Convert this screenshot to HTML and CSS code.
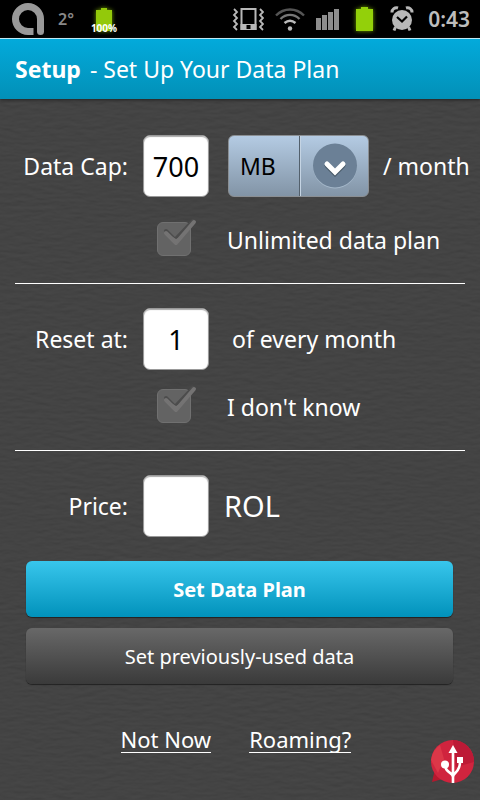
FILE: index.html
```html
<!DOCTYPE html>
<html lang="en">
<head>
<meta charset="utf-8">
<meta name="viewport" content="width=device-width, initial-scale=1">
<title>Setup - Set Up Your Data Plan</title>
<link rel="stylesheet" href="styles.css">
</head>
<body>
<svg class="texture" aria-hidden="true">
  <filter id="grain" x="0" y="0" width="100%" height="100%" color-interpolation-filters="sRGB">
    <feTurbulence type="fractalNoise" baseFrequency="0.07 0.25" numOctaves="3" seed="4" result="n"/>
    <feDiffuseLighting in="n" lighting-color="#fff" surfaceScale="1" diffuseConstant="0.4">
      <feDistantLight azimuth="270" elevation="42"/>
    </feDiffuseLighting>
  </filter>
  <rect width="100%" height="100%" filter="url(#grain)"/>
</svg>

<div class="status">
  <div class="status-left">
    <svg class="logo" width="34" height="34" viewBox="0 0 34 34" fill="none" stroke="#999" aria-hidden="true">
      <path d="M29.500 29.500V17A12.500 12.500 0 1 0 17 29.500H22.500" stroke-width="7"/>
      <path d="M29.500 28V29.500" stroke-width="7" stroke-linecap="round"/>
    </svg>
    <span class="temp">2°</span>
    <span class="charge">
      <svg width="28" height="32" viewBox="0 0 28 32" aria-hidden="true">
        <path class="glow" d="M6 7h5V5h6v2h5v21H6z" fill="#93c90a"/>
      </svg>
      <span class="percent">100%</span>
    </span>
  </div>
  <div class="status-right">
    <svg width="32" height="26" viewBox="0 0 32 26" fill="none" stroke="#b8b8b8" stroke-width="2" aria-hidden="true">
      <path d="M9.500 3h14v20h-14z"/>
      <path d="M8.500 18h16v6h-16z" fill="#b8b8b8" stroke="none"/>
      <path d="M14.500 19h4v4h-4z" fill="#000" stroke="none"/>
      <path d="M2 3l3 3-3 3 3 3-3 3 3 3-3 3 3 3M28 3l3 3-3 3 3 3-3 3 3 3-3 3 3 3" stroke-width="1.800"/>
    </svg>
    <svg width="30" height="26" viewBox="0 0 30 26" fill="none" stroke-width="2.400" aria-hidden="true">
      <path d="M1 9.500C9 1.500 21 1.500 29 9.500" stroke="#555"/>
      <path d="M5.500 13C11 7.500 19 7.500 24.500 13" stroke="#777"/>
      <path d="M9.500 17C13 14 17 14 20.500 17" stroke="#bbb"/>
      <circle cx="15" cy="22.500" r="2.200" fill="#bbb"/>
    </svg>
    <svg width="24" height="26" viewBox="0 0 24 26" fill="#8d8d8d" aria-hidden="true">
      <path d="M0 12h5v12H0zM6 9h5v15H6zM12 6h5v18h-5zM18 3h5v21h-5z"/>
    </svg>
    <svg width="28" height="32" viewBox="0 0 28 32" aria-hidden="true">
      <path class="glow" d="M5 6h5V4h7v2h5v22H5z" fill="#93d00a"/>
    </svg>
    <svg width="24" height="26" viewBox="0 0 24 26" aria-hidden="true">
      <path d="M2 6.500a4.500 4.500 0 0 1 6-4.500M22 6.500a4.500 4.500 0 0 0-6-4.500M5.500 21L4 24.500M18.500 21l1.500 3.500" fill="none" stroke="#b8b8b8" stroke-width="3"/>
      <circle cx="12" cy="14" r="10" fill="#b8b8b8"/>
      <path d="M7 11l5 4.500 5-5" fill="none" stroke="#000" stroke-width="2.200"/>
    </svg>
    <time class="clock">0:43</time>
  </div>
</div>

<header class="title">
  <h1><b>Setup</b> <span>- Set Up Your Data Plan</span></h1>
</header>

<form class="form">
  <section class="group first">
    <div class="row">
      <label for="cap">Data Cap:</label>
      <input class="field" id="cap" type="text" value="700">
      <div class="after">
        <div class="picker">
          <select id="unit" aria-label="Unit"><option>MB</option><option>GB</option></select>
          <svg class="arrow" width="70" height="62" viewBox="0 0 70 62" aria-hidden="true">
            <path d="M.5 1v60" stroke="#53606c"/>
            <path d="M1.500 1v60" stroke="#c5d4e3"/>
            <circle cx="36" cy="31.500" r="22" fill="#a5b8ca"/>
            <circle cx="36" cy="30.500" r="22" fill="#6b8096"/>
            <path d="M28 30.500l8 8 8-8" fill="none" stroke="#475867" stroke-width="5" stroke-linecap="round"/>
            <path d="M28 29l8 8 8-8" fill="none" stroke="#fff" stroke-width="5" stroke-linecap="round"/>
          </svg>
        </div>
        <span class="per">/ month</span>
      </div>
    </div>
    <div class="row check-row">
      <span class="check">
        <input id="unlimited" type="checkbox">
        <svg class="tick" width="42" height="38" viewBox="0 0 42 38" fill="none" stroke-width="4" stroke-linecap="round" stroke-linejoin="round" aria-hidden="true">
          <path d="M9 13l9 9L36 3" stroke="#4c4c4c"/>
          <path d="M9 15l10 10L37 4" stroke="#747373"/>
          <path d="M11 16l8 5 6-3-6 9z" fill="#747373"/>
        </svg>
      </span>
      <label class="option" for="unlimited">Unlimited data plan</label>
    </div>
  </section>

  <section class="group">
    <div class="row">
      <label for="reset">Reset at:</label>
      <input class="field" id="reset" type="text" value="1">
      <span class="note">of every month</span>
    </div>
    <div class="row check-row">
      <span class="check">
        <input id="unknown" type="checkbox">
        <svg class="tick" width="42" height="38" viewBox="0 0 42 38" fill="none" stroke-width="4" stroke-linecap="round" stroke-linejoin="round" aria-hidden="true">
          <path d="M9 13l9 9L36 3" stroke="#4c4c4c"/>
          <path d="M9 15l10 10L37 4" stroke="#747373"/>
          <path d="M11 16l8 5 6-3-6 9z" fill="#747373"/>
        </svg>
      </span>
      <label class="option" for="unknown">I don't know</label>
    </div>
  </section>

  <section class="group last">
    <div class="row">
      <label for="price">Price:</label>
      <input class="field" id="price" type="text">
      <span class="currency">ROL</span>
    </div>
  </section>

  <div class="actions">
    <button class="button primary" type="submit">Set Data Plan</button>
    <button class="button" type="button">Set previously-used data</button>
  </div>
</form>

<nav class="links">
  <a href="#">Not Now</a>
  <a href="#">Roaming?</a>
</nav>

<svg class="badge" width="44" height="44" viewBox="0 0 44 44" aria-hidden="true">
  <path d="M5 29L2 42l14-4z" fill="#b5182e"/>
  <circle cx="22.500" cy="21.500" r="21.500" fill="#d0243e"/>
  <path d="M23 0a21.500 21.500 0 0 1 21 22l-18 5z" fill="#bd1a36"/>
  <path d="M1 20a21.500 21.500 0 0 1 9-15l4 14-6 14z" fill="#dc3748"/>
  <path d="M23 43V10M23 37c0-5-8-4-8-12M23 37c0-5 7-4 7-15" fill="none" stroke="#fff" stroke-width="2.600"/>
  <path d="M18.500 13L23 5l4.500 8z" fill="#fff"/>
  <circle cx="15" cy="24.500" r="4" fill="#fff"/>
  <path d="M27 17h6v6h-6z" fill="#fff"/>
</svg>
</body>
</html>
```

FILE: styles.css
```css
* {
  box-sizing: border-box;
}

body {
  position: relative;
  min-height: 100vh;
  margin: 0;
  background: #444;
  color: #fff;
  font-family: "Noto Sans", "Open Sans", sans-serif;
  font-size: 23px;
  line-height: 32px;
}

.texture {
  position: absolute;
  z-index: -1;
  inset: 0;
  width: 100%;
  height: 100%;
  opacity: 0.12;
}

/* Status bar */
.status {
  display: flex;
  align-items: center;
  justify-content: space-between;
  height: 38px;
  padding: 0 10px 0 11px;
  background: #000;
}

.status-left,
.status-right {
  display: flex;
  align-items: center;
}

.status-left {
  gap: 13px;
}

.status-right {
  gap: 11px;
}

.temp {
  color: #888;
  font-size: 16px;
  font-weight: 600;
}

.charge {
  position: relative;
  display: flex;
  margin-left: 3px;
}

.percent {
  position: absolute;
  right: 0;
  bottom: 2px;
  left: 0;
  display: flex;
  justify-content: center;
  font-size: 10px;
  font-weight: 700;
  line-height: 10px;
}

.glow {
  filter: drop-shadow(0 0 2px #6f9c00);
}

.clock {
  margin-left: 3px;
  color: #bdbdbd;
  font-size: 21px;
  font-weight: 600;
}

/* Title bar */
.title {
  padding: 14px 15px;
  border-top: 1px solid #bfe9f5;
  background: linear-gradient(#03aadb, #0290b7);
  box-shadow: 0 1px 3px #222;
}

.title h1 {
  display: flex;
  gap: 9px;
  margin: 0;
  font-size: 23px;
  font-weight: 400;
  line-height: 32px;
}

/* Form */
.group {
  margin: 0 15px;
  padding: 24px 0 25px;
  border-bottom: 1px solid #fff;
}

.group.first {
  padding-top: 36px;
}

.group.last {
  padding-bottom: 24px;
  border-bottom: 0;
}

.row {
  display: grid;
  grid-template-columns: 113px 66px 1fr;
  column-gap: 15px;
  align-items: center;
  white-space: nowrap;
}

.row > label:first-child {
  text-align: right;
}

.field {
  width: 100%;
  height: 62px;
  padding: 0;
  border: 1px solid #999;
  border-radius: 7px;
  background: #fff;
  box-shadow: inset 0 1px 1px #aaa;
  color: #000;
  font: inherit;
  font-size: 27px;
  text-align: center;
}

.after {
  display: flex;
  align-items: center;
  gap: 14px;
  padding-left: 4px;
}

.picker {
  position: relative;
  flex: 0 0 141px;
}

.picker select {
  display: block;
  width: 100%;
  height: 62px;
  padding: 0 11px;
  border: 1px solid #8b8f93;
  border-radius: 6px;
  appearance: none;
  background: linear-gradient(#b4cbe3, #8294a6);
  color: #000;
  font: inherit;
}

.arrow {
  position: absolute;
  top: 0;
  right: 0;
  pointer-events: none;
}

.check-row {
  margin-top: 19px;
}

.first .check-row {
  margin-top: 25px;
}

.check {
  position: relative;
  grid-column: 2;
  display: flex;
  align-items: flex-start;
  height: 36px;
  padding-left: 14px;
}

.check input {
  width: 34px;
  height: 34px;
  margin: 0;
  border: 1px solid #707070;
  border-radius: 6px;
  appearance: none;
  background: #636363;
}

.tick {
  position: absolute;
  top: -4px;
  left: 14px;
  pointer-events: none;
}

.option {
  padding-left: 3px;
}

.note {
  padding-left: 8px;
}

.currency {
  font-size: 29px;
}

/* Actions */
.actions {
  display: grid;
  gap: 11px;
  padding: 0 27px 0 26px;
}

.button {
  height: 56px;
  padding: 2px 6px 0;
  border: 0;
  border-radius: 6px;
  background: linear-gradient(#686868, #3a3a3a);
  box-shadow: 0 1px 1px #222;
  color: #fff;
  font: inherit;
  font-size: 20px;
}

.button.primary {
  background: linear-gradient(#38c6ec, #0192bb);
  font-weight: 700;
}

.links {
  display: flex;
  justify-content: center;
  gap: 38px;
  padding: 43px 18px 32px 10px;
  font-size: 22px;
}

.links a {
  border-bottom: 1px solid #fff;
  color: #fff;
  line-height: 25px;
  text-decoration: none;
}

.badge {
  position: absolute;
  right: 6px;
  bottom: 16px;
}
```
